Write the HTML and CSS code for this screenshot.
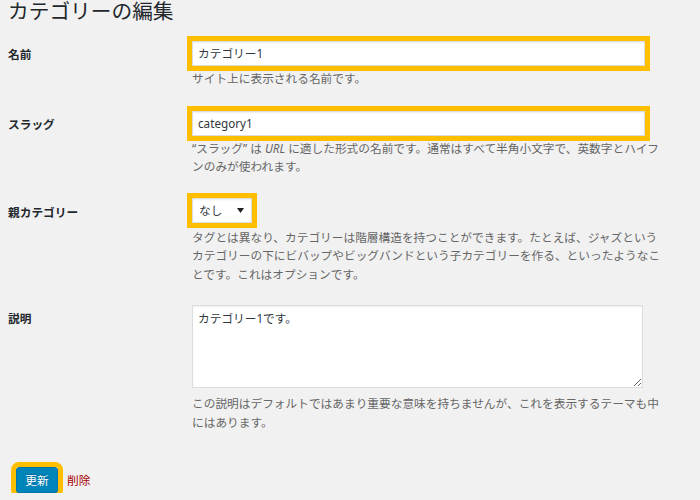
FILE: index.html
```html
<!DOCTYPE html>
<html lang="ja">
<head>
<meta charset="utf-8">
<title>カテゴリーの編集</title>
<link rel="stylesheet" href="styles.css">
</head>
<body>
<div class="wrap">
  <h1 class="title">カテゴリーの編集</h1>
  <div class="form">
    <div class="row row-name">
      <div class="label">名前</div>
      <div class="field">
        <div class="input hl">カテゴリー1</div>
        <p class="help">サイト上に表示される名前です。</p>
      </div>
    </div>
    <div class="row row-slug">
      <div class="label">スラッグ</div>
      <div class="field">
        <div class="input hl">category1</div>
        <p class="help">“スラッグ” は <i>URL</i> に適した形式の名前です。通常はすべて半角小文字で、英数字とハイフンのみが使われます。</p>
      </div>
    </div>
    <div class="row row-parent">
      <div class="label label-parent">親カテゴリー</div>
      <div class="field">
        <div class="select hl"><span>なし</span><svg class="arrow" width="7" height="5" viewBox="0 0 7 5"><path d="M0 0H7L3.5 5Z" fill="#222"/></svg></div>
        <p class="help help-parent">タグとは異なり、カテゴリーは階層構造を持つことができます。たとえば、ジャズというカテゴリーの下にビバップやビッグバンドという子カテゴリーを作る、といったようなことです。これはオプションです。</p>
      </div>
    </div>
    <div class="row row-desc">
      <div class="label">説明</div>
      <div class="field">
        <textarea class="textarea">カテゴリー1です。</textarea>
        <p class="help help-desc">この説明はデフォルトではあまり重要な意味を持ちませんが、これを表示するテーマも中にはあります。</p>
      </div>
    </div>
  </div>
  <div class="actions">
    <span class="button hl">更新</span>
    <a class="delete" href="#">削除</a>
  </div>
</div>
</body>
</html>
```
FILE: styles.css
```css
html, body {
  margin: 0;
  padding: 0;
  background: #f1f1f1;
}
body {
  font-family: "Noto Sans", "Noto Sans CJK JP", sans-serif;
  font-size: 11.7px;
  line-height: 18.5px;
  color: #444;
}
.wrap {
  padding-left: 8px;
}
.title {
  margin: 0;
  padding-top: 1px;
  font-size: 20.7px;
  line-height: 20px;
  font-weight: 400;
  color: #23282d;
}
.form {
  display: flex;
  flex-direction: column;
}
.row {
  display: grid;
  grid-template-columns: 184px 472px;
}
.row-name { margin-top: 20px; }
.row-slug { margin-top: 23.5px; }
.row-parent { margin-top: 22.5px; }
.row-desc { margin-top: 21.5px; }
.label {
  padding-top: 3.75px;
  font-weight: 700;
  color: #23282d;
}
.label-parent {
  padding-top: 4.75px;
}
.hl {
  outline: 5px solid #ffbf00;
}
.input {
  box-sizing: border-box;
  width: 453px;
  height: 25px;
  padding: 2px 5px;
  background: #fff;
  border: 1px solid #ddd;
  box-shadow: inset 0 1px 2px rgba(0,0,0,.07);
  color: #32373c;
}
.help {
  margin: 2.75px 0 0;
  color: #666;
}
.help-parent { margin-top: 4.75px; }
.help-desc { margin-top: 6.5px; }
.select {
  box-sizing: border-box;
  width: 60px;
  height: 25px;
  display: flex;
  align-items: center;
  justify-content: space-between;
  padding: 0 7px 0 6px;
  background: #fff;
  border: 1px solid #ddd;
  box-shadow: inset 0 1px 2px rgba(0,0,0,.07);
  color: #32373c;
}
.arrow { display: block; }
.textarea {
  display: block;
  box-sizing: border-box;
  width: 451px;
  height: 83px;
  margin: 0;
  padding: 3px 5px;
  border: 1px solid #ddd;
  box-shadow: inset 0 1px 2px rgba(0,0,0,.07);
  background: #fff;
  font: inherit;
  color: #32373c;
  resize: both;
}
.actions {
  margin-top: 35.5px;
  display: flex;
  align-items: center;
  padding-left: 8px;
}
.button {
  box-sizing: border-box;
  width: 42px;
  height: 26px;
  display: flex;
  align-items: center;
  justify-content: center;
  background: #0085ba;
  border: 1px solid #0073aa;
  border-radius: 3px;
  box-shadow: 0 1px 0 #006799;
  color: #fff;
  text-shadow: 0 -1px 1px #006799;
}
.delete {
  margin-left: 9px;
  color: #a00;
  text-decoration: none;
}
```
